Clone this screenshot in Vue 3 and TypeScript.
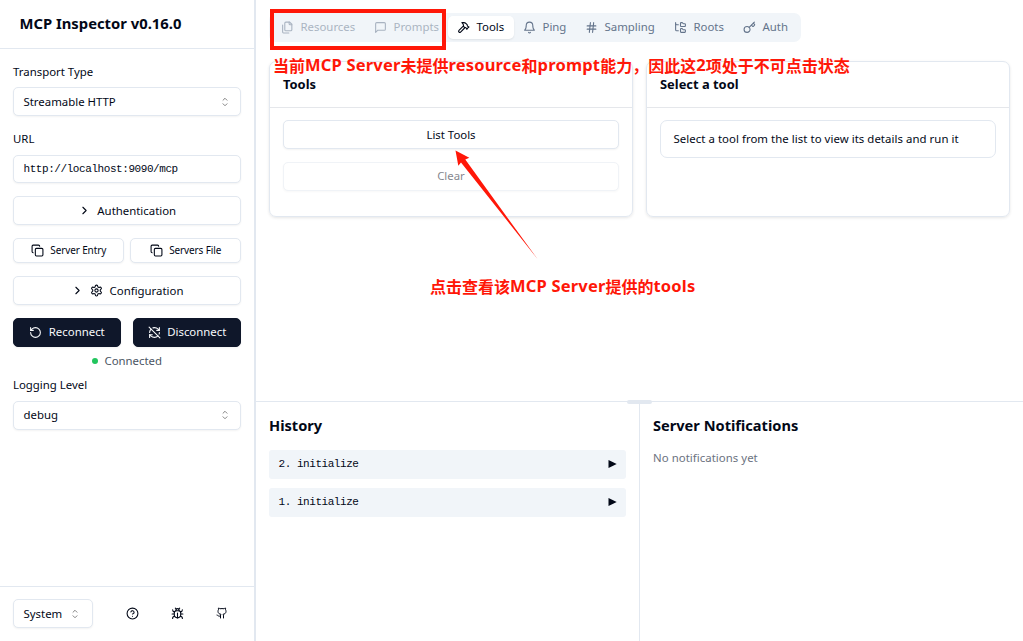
<script setup lang="ts">
import { h, type FunctionalComponent } from 'vue'

const icons: Record<string, string[]> = {
  files: ['M20 7h-3a2 2 0 0 1-2-2V2', 'M9 18a2 2 0 0 1-2-2V4a2 2 0 0 1 2-2h7l4 4v10a2 2 0 0 1-2 2Z', 'M3 7.6v12.8A1.6 1.6 0 0 0 4.6 22h9.8'],
  message: ['M21 15a2 2 0 0 1-2 2H7l-4 4V5a2 2 0 0 1 2-2h14a2 2 0 0 1 2 2z'],
  hammer: ['m15 12-8.373 8.373a1 1 0 1 1-3-3L12 9', 'm18 15 4-4', 'm21.5 11.5-1.914-1.914A2 2 0 0 1 19 8.172V7l-2.26-2.26a6 6 0 0 0-4.202-1.756L9 2.96l.92.82A6.18 6.18 0 0 1 12 8.4V10l2 2h1.172a2 2 0 0 1 1.414.586L18.5 14.5'],
  bell: ['M6 8a6 6 0 0 1 12 0c0 7 3 9 3 9H3s3-2 3-9', 'M10.3 21a1.94 1.94 0 0 0 3.4 0'],
  hash: ['M4 9h16', 'M4 15h16', 'M10 3 8 21', 'M16 3l-2 18'],
  tree: ['M20 10a1 1 0 0 0 1-1V6a1 1 0 0 0-1-1h-2.5a1 1 0 0 1-.8-.4l-.9-1.2A1 1 0 0 0 15 3h-2a1 1 0 0 0-1 1v5a1 1 0 0 0 1 1Z', 'M20 21a1 1 0 0 0 1-1v-3a1 1 0 0 0-1-1h-2.9a1 1 0 0 1-.88-.55l-.42-.85a1 1 0 0 0-.92-.6H13a1 1 0 0 0-1 1v5a1 1 0 0 0 1 1Z', 'M3 5a2 2 0 0 0 2 2h3', 'M3 3v13a2 2 0 0 0 2 2h3'],
  key: ['m15.5 7.5 2.3 2.3a1 1 0 0 0 1.4 0l2.1-2.1a1 1 0 0 0 0-1.4L19 4', 'm21 2-9.6 9.6', 'M13 15.5a5.5 5.5 0 1 1-11 0a5.5 5.5 0 1 1 11 0'],
  chevron: ['m9 18 6-6-6-6'],
  copy: ['M10 8h10a2 2 0 0 1 2 2v10a2 2 0 0 1-2 2H10a2 2 0 0 1-2-2V10a2 2 0 0 1 2-2Z', 'M4 16c-1.1 0-2-.9-2-2V4c0-1.1.9-2 2-2h10c1.1 0 2 .9 2 2'],
  settings: ['M12.22 2h-.44a2 2 0 0 0-2 2v.18a2 2 0 0 1-1 1.73l-.43.25a2 2 0 0 1-2 0l-.15-.08a2 2 0 0 0-2.73.73l-.22.38a2 2 0 0 0 .73 2.73l.15.1a2 2 0 0 1 1 1.72v.51a2 2 0 0 1-1 1.74l-.15.09a2 2 0 0 0-.73 2.73l.22.38a2 2 0 0 0 2.73.73l.15-.08a2 2 0 0 1 2 0l.43.25a2 2 0 0 1 1 1.73V20a2 2 0 0 0 2 2h.44a2 2 0 0 0 2-2v-.18a2 2 0 0 1 1-1.73l.43-.25a2 2 0 0 1 2 0l.15.08a2 2 0 0 0 2.73-.73l.22-.39a2 2 0 0 0-.73-2.73l-.15-.08a2 2 0 0 1-1-1.74v-.5a2 2 0 0 1 1-1.74l.15-.09a2 2 0 0 0 .73-2.73l-.22-.38a2 2 0 0 0-2.73-.73l-.15.08a2 2 0 0 1-2 0l-.43-.25a2 2 0 0 1-1-1.73V4a2 2 0 0 0-2-2z', 'M15 12a3 3 0 1 1-6 0a3 3 0 1 1 6 0'],
  rotate: ['M3 12a9 9 0 1 0 9-9 9.75 9.75 0 0 0-6.74 2.74L3 8', 'M3 3v5h5'],
  refreshOff: ['M21 8L18.74 5.74A9.75 9.75 0 0 0 12 3C11 3 10.03 3.16 9.13 3.47', 'M8 16H3v5', 'M3 12C3 9.51 4 7.26 5.64 5.64', 'm3 16 2.26 2.26A9.75 9.75 0 0 0 12 21c2.49 0 4.74-1 6.36-2.64', 'M21 12c0 1-.16 1.97-.47 2.87', 'M21 3v5h-5', 'M22 22 2 2'],
  help: ['M22 12a10 10 0 1 1-20 0a10 10 0 1 1 20 0', 'M9.09 9a3 3 0 0 1 5.83 1c0 2-3 3-3 3', 'M12 17h.01'],
  bug: ['m8 2 1.88 1.88', 'M14.12 3.88 16 2', 'M9 7.13v-1a3.003 3.003 0 1 1 6 0v1', 'M12 20c-3.3 0-6-2.7-6-6v-3a4 4 0 0 1 4-4h4a4 4 0 0 1 4 4v3c0 3.3-2.7 6-6 6', 'M12 20v-9', 'M6.53 9C4.6 8.8 3 7.1 3 5', 'M6 13H2', 'M3 21c0-2.1 1.7-3.9 3.8-4', 'M20.97 5c0 2.1-1.6 3.8-3.5 4', 'M22 13h-4', 'M17.2 17c2.1.1 3.8 1.9 3.8 4'],
  github: ['M15 22v-4a4.8 4.8 0 0 0-1-3.5c3 0 6-2 6-5.5.08-1.25-.27-2.48-1-3.5.28-1.15.28-2.35 0-3.5 0 0-1 0-3 1.5-2.64-.5-5.36-.5-8 0C6 2 5 2 5 2c-.3 1.15-.3 2.35 0 3.5A5.403 5.403 0 0 0 4 9c0 3.5 3 5.5 6 5.5-.39.49-.68 1.05-.85 1.65-.17.6-.22 1.23-.15 1.85v4', 'M9 18c-4.51 2-5-2-7-2'],
  sort: ['m8 8.5 4-4 4 4', 'm8 15.5 4 4 4-4'],
}

const Icon: FunctionalComponent<{ name: string }> = (props) =>
  h('svg', {
    viewBox: '0 0 24 24', width: 13, height: 13, fill: 'none', stroke: 'currentColor',
    'stroke-width': 2, 'stroke-linecap': 'round', 'stroke-linejoin': 'round',
  }, icons[props.name].map((d) => h('path', { d })))
Icon.props = ['name']

interface Tab { label: string; icon: string; state?: 'active' | 'disabled' }
const tabs: Tab[] = [
  { label: 'Resources', icon: 'files', state: 'disabled' },
  { label: 'Prompts', icon: 'message', state: 'disabled' },
  { label: 'Tools', icon: 'hammer', state: 'active' },
  { label: 'Ping', icon: 'bell' },
  { label: 'Sampling', icon: 'hash' },
  { label: 'Roots', icon: 'tree' },
  { label: 'Auth', icon: 'key' },
]
const history: string[] = ['2. initialize', '1. initialize']
</script>

<template>
  <div class="app">
    <aside class="sidebar">
      <header class="brand"><h1>MCP Inspector v0.16.0</h1></header>
      <div class="settings">
        <label class="transport">Transport Type</label>
        <button class="control select"><span>Streamable HTTP</span><Icon name="sort" class="sort" /></button>
        <label class="url-label">URL</label>
        <div class="control input">http://localhost:9090/mcp</div>
        <button class="control centered authentication"><Icon name="chevron" /><span>Authentication</span></button>
        <div class="pair exports">
          <button class="control centered small"><Icon name="copy" /><span>Server Entry</span></button>
          <button class="control centered small"><Icon name="copy" /><span>Servers File</span></button>
        </div>
        <button class="control centered"><Icon name="chevron" /><Icon name="settings" /><span>Configuration</span></button>
        <div class="pair connection">
          <button class="control centered dark"><Icon name="rotate" /><span>Reconnect</span></button>
          <button class="control centered dark"><Icon name="refreshOff" /><span>Disconnect</span></button>
        </div>
        <div class="status"><i class="dot"></i><span>Connected</span></div>
        <label>Logging Level</label>
        <button class="control select level"><span>debug</span><Icon name="sort" class="sort" /></button>
      </div>
      <footer class="footer">
        <button class="control select theme"><span>System</span><Icon name="sort" class="sort" /></button>
        <nav class="links"><Icon name="help" /><Icon name="bug" /><Icon name="github" class="github" /></nav>
      </footer>
    </aside>

    <main class="main">
      <section class="workspace">
        <nav class="tabs">
          <button v-for="t in tabs" :key="t.label" class="tab" :class="t.state">
            <Icon :name="t.icon" /><span>{{ t.label }}</span>
          </button>
        </nav>
        <div class="cards">
          <article class="card">
            <h3>Tools</h3>
            <div class="card-body">
              <button class="control centered"><span>List Tools</span></button>
              <button class="control centered faded"><span>Clear</span></button>
            </div>
          </article>
          <article class="card">
            <h3>Select a tool</h3>
            <div class="card-body"><p class="alert">Select a tool from the list to view its details and run it</p></div>
          </article>
        </div>
      </section>
      <section class="bottom">
        <i class="handle"></i>
        <div class="history">
          <h2>History</h2>
          <div v-for="item in history" :key="item" class="entry"><span>{{ item }}</span><svg width="9" height="8" viewBox="0 0 9 8"><path d="M.5 0L8.7 4L.5 8Z" fill="currentColor" /></svg></div>
        </div>
        <div class="notifications">
          <h2>Server Notifications</h2>
          <p>No notifications yet</p>
        </div>
      </section>
    </main>

    <div class="mark-box"></div>
    <div class="note note-tabs"><span>当前</span><span class="latin">MCP Server</span><span>未提供</span><span class="latin">resource</span><span>和</span><span class="latin">prompt</span><span>能力，因此这</span><span class="latin">2</span><span>项处于不可点击状态</span></div>
    <div class="note note-list"><span>点击查看该</span><span class="latin">MCP Server</span><span>提供的</span><span class="latin">tools</span></div>
    <svg class="arrow" width="90" height="115" viewBox="450 147 90 115"><path d="M455.5 150.5L469.3 157.8L465.3 159.6L537.5 259L461 162.5L458.3 165.8Z" fill="#ff1708" /></svg>
  </div>
</template>

<style>
body { margin: 0; overflow: hidden; }
</style>

<style scoped>
* { box-sizing: border-box; }
.app {
  position: relative; display: flex; width: 1023px; height: 641px; overflow: hidden;
  background: #fff; color: #020817;
  font-family: "Noto Sans", "Noto Sans CJK SC", sans-serif; font-size: 11.4px; line-height: 16px;
}
h1, h2, h3, p { margin: 0; }
button { font: inherit; color: inherit; margin: 0; }
svg { flex: none; display: block; }
span { white-space: nowrap; }
.sidebar { width: 256px; flex: none; border-right: 2px solid #e2e8f0; display: flex; flex-direction: column; }
.brand { height: 49px; border-bottom: 1px solid #e2e8f0; padding: 12px 19.5px; }
h1 { font-size: 14.8px; line-height: 23px; font-weight: 700; white-space: nowrap; }
.settings { flex: 1; padding: 15px 13px 0; display: flex; flex-direction: column; }
label { display: block; height: 16px; margin-bottom: 8px; }
.transport { margin-bottom: 7px; }
.control {
  height: 29px; width: 100%; flex: none; display: flex; align-items: center; padding: 0 9.5px;
  background: #fff; border: 1px solid #e2e8f0; border-radius: 5px; box-shadow: 0 1px 2px rgba(0, 0, 0, .05);
}
.select { justify-content: space-between; }
.level { padding-bottom: 1px; }
.sort { width: 12px; height: 12px; color: #858585; }
.url-label { margin-top: 15px; }
.input { height: 28px; padding-bottom: 1px; font-family: "Liberation Mono", monospace; font-size: 11px; letter-spacing: -.43px; }
.centered { justify-content: center; gap: 6.5px; }
.authentication { margin-top: 13px; }
.pair { display: flex; }
.pair .control { flex: 1; width: auto; min-width: 0; }
.exports { margin: 13px 0; gap: 6px; }
.small { height: 25px; font-size: 10px; letter-spacing: -.12px; padding-bottom: 1px; }
.connection { margin-top: 13px; gap: 12px; }
.dark { background: #0f172a; border-color: #0f172a; color: #f8fafc; padding-bottom: 1px; }
.status { height: 16px; margin: 6px 0 8px; display: flex; justify-content: center; align-items: center; gap: 6.5px; color: #4b5563; }
.dot { width: 6px; height: 6px; border-radius: 50%; background: #22c55e; }
.footer { height: 55px; border-top: 1px solid #e2e8f0; padding: 12px 13px; display: flex; }
.theme { width: 80px; }
.theme .sort { margin-right: 1.5px; }
.links { display: flex; gap: 32px; align-items: center; height: 29px; margin-left: 33px; }
.github { width: 12px; height: 12px; margin-bottom: 1px; }

.main { flex: 1; min-width: 0; display: flex; flex-direction: column; }
.workspace { height: 401px; padding: 13px; }
.tabs {
  width: 532px; height: 29px; padding: 3px; border-radius: 7px; background: #f1f5f9; color: #64748b;
  display: grid; grid-template-columns: 93px 83px 66px 62px 89px 69px 64px; grid-template-rows: 23px;
}
.tab { border: 0; background: none; padding: 0 0 1px 9px; display: flex; align-items: center; gap: 6.5px; border-radius: 5px; }
.disabled { opacity: .5; }
.active { background: #fff; color: #020817; box-shadow: 0 1px 2px rgba(0, 0, 0, .08); }
.cards { margin-top: 19px; display: grid; grid-template-columns: 1fr 1fr; gap: 13px; width: 741px; }
.card { height: 156px; border: 1px solid #e2e8f0; border-radius: 7px; box-shadow: 0 1px 3px rgba(0, 0, 0, .1); }
h3 { height: 46px; padding: 14px 13px 0; border-bottom: 1px solid #e5e7eb; font-size: 12.9px; line-height: 17px; font-weight: 700; }
.card-body { padding: 12px 13px; display: flex; flex-direction: column; gap: 13px; }
.faded { opacity: .5; padding-bottom: 1px; }
.alert { height: 38px; padding: 9px 12.5px; border: 1px solid #e2e8f0; border-radius: 7px; line-height: 17px; letter-spacing: .05px; white-space: nowrap; }
.bottom { position: relative; flex: 1; border-top: 1px solid #e2e8f0; display: flex; }
.handle { position: absolute; left: 371px; top: -2px; width: 25px; height: 4px; border-radius: 2px; background: #e2e8f0; }
.history { width: 384px; padding: 12px 13px; border-right: 1px solid #e2e8f0; }
.notifications { padding: 12px 13px; }
h2 { margin: 0 0 14px; font-size: 14.6px; line-height: 22px; font-weight: 700; white-space: nowrap; }
.notifications p { color: #6b7280; letter-spacing: .04px; white-space: nowrap; }
.entry {
  height: 29px; margin-bottom: 9px; padding: 0 9.5px 1px 9.5px; background: #f1f5f9; border-radius: 3px;
  display: flex; align-items: center; justify-content: space-between;
  font-family: "Liberation Mono", monospace; font-size: 11px; letter-spacing: -.45px;
}
.mark-box { position: absolute; left: 270px; top: 9px; width: 176px; height: 41px; border: 4px solid #ff1708; }
.note { position: absolute; display: flex; color: #ff1708; font-weight: 700; font-size: 16px; line-height: 22px; font-family: "Noto Sans CJK SC", sans-serif; }
.latin { font-family: "Noto Sans", sans-serif; font-size: 16.5px; letter-spacing: .18px; }
.note-tabs { left: 273px; top: 54px; }
.note-list { left: 430px; top: 275px; }
.arrow { position: absolute; left: 450px; top: 147px; }
</style>
